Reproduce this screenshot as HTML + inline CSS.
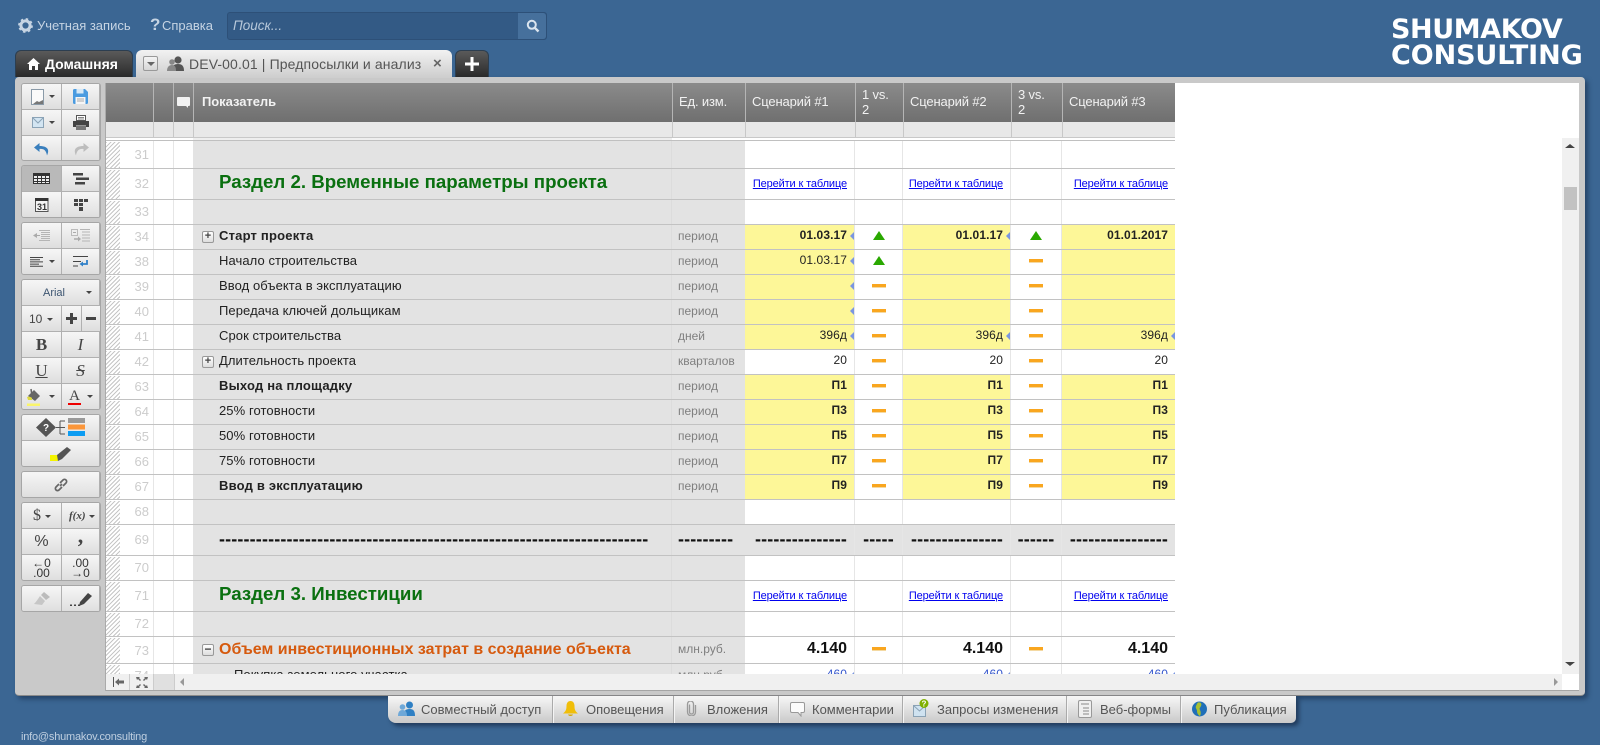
<!DOCTYPE html>
<html lang="ru"><head><meta charset="utf-8"><title>DEV-00.01</title>
<style>
html,body{margin:0;padding:0;width:1600px;height:745px;overflow:hidden;background:#3b6693;font-family:"Liberation Sans",Arial,sans-serif}
.a{position:absolute}
svg{display:block}
.hl{color:#c6d4e3;font-size:13px;line-height:20px;white-space:nowrap}
.logo{font-family:"DejaVu Sans",sans-serif;font-weight:bold;color:#fff;font-size:27px;line-height:28px;white-space:nowrap}
.tab{border-radius:6px 6px 0 0;box-sizing:border-box}
.dk{background:linear-gradient(#5a5a5a,#2a2a2a);border:1px solid #2c3e50;border-bottom:0}
#panel{left:15px;top:77px;width:1570px;height:619px;background:#c9c9c9;border-radius:4px;box-shadow:3px 3px 5px rgba(20,40,70,.55);border-bottom:1px solid #8a8a8a;box-sizing:border-box}
.g{position:absolute;left:21px;width:80px;box-sizing:border-box;border:1px solid #a6a6a6;border-radius:3px;overflow:hidden;display:grid;grid-template-columns:40px 20px 18px;grid-auto-rows:26px}
.t{background:linear-gradient(#f6f6f6,#dedede);border-right:1px solid #b0b0b0;border-bottom:1px solid #b0b0b0;box-sizing:border-box;display:flex;align-items:center;justify-content:center;color:#444;font-size:12px;position:relative}
.r2{grid-column:span 2}.f{grid-column:span 3}
.t.on{background:#b9b9b9}
.car{position:absolute;width:0;height:0;border-left:3px solid transparent;border-right:3px solid transparent;border-top:3px solid #444;top:11px}
.se{font-family:"Liberation Serif",serif;font-size:17px;font-weight:bold;color:#444}
#grid{left:105px;top:83px;width:1474px;height:608px;background:#fff;overflow:hidden;border-left:1px solid #aaa;box-sizing:border-box}
.hd{position:absolute;left:0;top:0;width:1069px;height:39px;background:linear-gradient(#8b8b8b,#6f6f6f);color:#fff;font-size:13px;letter-spacing:-.15px}
.hd div{position:absolute;top:0;height:39px;line-height:38px;white-space:nowrap;border-left:1px solid #b5b5b5;box-sizing:border-box;color:#f2f2f2}
.fl{position:absolute;left:0;top:39px;width:1069px;height:15px;background:#e8e8e8}
.fl i{position:absolute;top:0;width:1px;height:15px;background:#c8c8c8}
.row{position:absolute;left:0;width:1069px;display:flex;box-sizing:border-box;border-bottom:1px solid #c2c2c2;font-size:13px;color:#222;white-space:nowrap;overflow:hidden}
.row>div{box-sizing:border-box;height:100%;position:relative;flex:none;overflow:visible}
.c0{width:48px;text-align:right;padding-right:4px;color:#ccc;border-right:1px solid #e6e6e6;background:repeating-linear-gradient(135deg,#c6c6c6 0 1px,#fff 1px 3px) 0 1px/14px 100% no-repeat;background-color:#fff}
.c1,.c2{border-right:1px solid #e6e6e6}
.c1{width:20px}
.c2{width:19px;background:#fff;border-right:0}
.nm{width:479px;background:#e3e3e3;padding-left:26px;border-right:1px solid #dcdcdc;letter-spacing:.08px;line-height:21px}
.nm.bd{letter-spacing:.2px}
.un{width:73px;background:#e3e3e3;padding-left:6px;color:#7f7f7f;font-size:12px;line-height:22px}
.v1,.v2,.v3{text-align:right;border-right:1px solid #e6e6e6;color:#222;font-size:12px;letter-spacing:.08px;line-height:21px}
.v1{width:110px;padding-right:7px}.v2{width:108px;padding-right:7px}.v3{width:113px;padding-right:7px;border-right:0}
.d1,.d2{text-align:center;border-right:1px solid #e6e6e6}
.d1{width:48px}.d2{width:51px}
.y{background:#fdf798}
.s{background:#e3e3e3!important}
.bd{font-weight:bold}
.up{position:absolute;left:50%;top:50%;margin:-6px 0 0 -6px;width:0;height:0;border-left:6px solid transparent;border-right:6px solid transparent;border-bottom:9px solid #2aa800}
.ds{position:absolute;left:50%;top:50%;margin:-3px 0 0 -7px;width:14px;height:3px;background:#f9a61f;border-bottom:1px solid #f4d9a2}
.mk{position:absolute;right:0;top:50%;margin-top:-5px;width:0;height:0;border-top:4px solid transparent;border-bottom:4px solid transparent;border-right:4px solid #7a96e0}
.pm{position:absolute;left:9px;top:50%;margin-top:-6px;width:10px;height:10px;border:1px solid #999;border-radius:2px;background:linear-gradient(#fff,#ddd);color:#444;font-size:11px;line-height:9px;text-align:center;font-weight:bold;letter-spacing:0}
.lk{line-height:28px;letter-spacing:0}
a{color:#00e;font-size:11px;text-decoration:underline;letter-spacing:-.12px}
.nm.h1{font-size:18.7px;font-weight:bold;color:#0a7010;letter-spacing:0;line-height:26px}
.nm.h2{font-size:16px;font-weight:bold;color:#d65a0e;letter-spacing:0;line-height:25px}
.big{font-size:16px;font-weight:bold;color:#111;letter-spacing:0;line-height:24px}
.dash,.row .dash{font-weight:bold;color:#111;font-size:18px;letter-spacing:.14px;line-height:29px}
#sb{position:absolute;left:0;top:591px;width:1473px;height:17px;background:#f0f0f0;border-bottom:1px solid #a5a5a5;box-sizing:border-box}
#vs{position:absolute;left:1456px;top:55px;width:17px;height:536px;background:#f0f0f0}
#btm{left:388px;top:696px;width:908px;height:27px;background:linear-gradient(#f7f7f7,#c9c9c9);border-radius:0 0 5px 8px;box-shadow:3px 3px 4px rgba(15,30,55,.6);color:#555;font-size:13px;line-height:27px}
#btm span{position:absolute;top:0;white-space:nowrap}
#btm i{position:absolute;top:0;width:1px;height:27px;background:#aaa;border-right:1px solid #f4f4f4}
#btm svg{position:absolute}
</style></head>
<body>
<!-- top bar -->
<svg class="a" style="left:18px;top:18px" width="15" height="15" viewBox="0 0 15 15"><circle cx="7.5" cy="7.5" r="4.6" fill="none" stroke="#c6d4e3" stroke-width="3"/><circle cx="7.5" cy="7.5" r="6.3" fill="none" stroke="#c6d4e3" stroke-width="2.2" stroke-dasharray="2.4 2.55"/></svg>
<div class="a hl" style="left:37px;top:16px">Учетная запись</div>
<div class="a hl" style="left:150px;top:15px;font-weight:bold;font-size:17px">?</div>
<div class="a hl" style="left:162px;top:16px">Справка</div>
<div class="a" style="left:227px;top:12px;width:320px;height:28px;background:#335a85;border:1px solid #2d5078;box-sizing:border-box;border-radius:3px"></div>
<div class="a" style="left:518px;top:13px;width:28px;height:26px;background:#46709c;border-radius:0 3px 3px 0"></div>
<svg class="a" style="left:526px;top:19px" width="14" height="14" viewBox="0 0 14 14"><circle cx="5.8" cy="5.8" r="4" fill="none" stroke="#dbe5ef" stroke-width="2"/><path d="M8.8 8.8L12.5 12.5" stroke="#dbe5ef" stroke-width="2.4"/></svg>
<div class="a hl" style="left:233px;top:16px;font-style:italic;color:#b7c8da;font-size:13.5px">Поиск...</div>
<div class="a logo" style="left:1391px;top:16px;letter-spacing:-.4px">SHUMAKOV</div>
<div class="a logo" style="left:1391px;top:42px;letter-spacing:-.1px">CONSULTING</div>
<!-- tabs -->
<div class="a tab dk" style="left:15px;top:50px;width:118px;height:27px"></div>
<svg class="a" style="left:27px;top:58px" width="13" height="12" viewBox="0 0 13 12"><path d="M6.5 0L0 6h2v6h3V8h3v4h3V6h2z" fill="#fff"/></svg>
<div class="a" style="left:45px;top:54px;color:#fff;font-weight:bold;font-size:14px;line-height:20px;white-space:nowrap">Домашняя</div>
<div class="a tab" style="left:136px;top:50px;width:316px;height:28px;background:linear-gradient(#f2f2f2,#cdcdcd);z-index:2"></div>
<div class="a" style="left:143px;top:56px;width:15px;height:15px;box-sizing:border-box;border:1px solid #999;border-radius:2px;background:linear-gradient(#f4f4f4,#d6d6d6);z-index:3"></div>
<div class="a" style="left:147px;top:62px;width:0;height:0;border-left:4px solid transparent;border-right:4px solid transparent;border-top:4px solid #666;z-index:3"></div>
<svg class="a" style="left:167px;top:56px;z-index:3" width="17" height="15" viewBox="0 0 17 15"><circle cx="11" cy="4" r="3.6" fill="#555"/><path d="M4.500 15c0-5 2.500-7 6.500-7s6 2 6 7z" fill="#555"/><circle cx="5" cy="6" r="2.800" fill="#888"/><path d="M0 15c0-4 2-6 5-6s4 2 4 6z" fill="#888"/></svg>
<div class="a" style="left:189px;top:54px;color:#555;font-size:14px;line-height:20px;white-space:nowrap;z-index:3;letter-spacing:.12px">DEV-00.01 | Предпосылки и анализ</div>
<div class="a" style="left:433px;top:54px;color:#666;font-size:15px;line-height:20px;font-weight:bold;z-index:3">×</div>
<div class="a tab dk" style="left:455px;top:50px;width:34px;height:27px"></div>
<svg class="a" style="left:465px;top:57px" width="14" height="14" viewBox="0 0 14 14"><path d="M5.500 0h3v5.500H14v3H8.500V14h-3V8.500H0v-3h5.500z" fill="#fff"/></svg>

<div id="panel" class="a"></div>
<!-- toolbar -->
<div class="g" style="top:83px;height:78px">
 <div class="t"><svg style="margin-right:7px" width="14" height="16" viewBox="0 0 14 16"><path d="M.5.5h12v15H.5z" fill="#fafafa" stroke="#8a9aa8"/><path d="M2 15l4-3 2 1 4-2v4z" fill="#777"/></svg><span class="car" style="right:6px;top:11px"></span></div>
 <div class="t r2"><svg width="15" height="15" viewBox="0 0 15 15"><path d="M0 1.500Q0 0 1.500 0H12l3 3v10.500Q15 15 13.500 15h-12Q0 15 0 13.500z" fill="#4a9be0"/><path d="M3.500 0h7v4.500h-7z" fill="#d6e8f6"/><path d="M2.500 8h10v7h-10z" fill="#f6f6f6"/><path d="M4 10h7M4 12h7" stroke="#aaa"/></svg></div>
 <div class="t"><svg style="margin-right:7px" width="12" height="11" viewBox="0 0 12 11"><path d="M.5.500h11v10H.5z" fill="#d3e5f2" stroke="#8ba3b6"/><path d="M.5.500L6 6l5.500-5.500" fill="none" stroke="#8ba3b6"/></svg><span class="car" style="right:6px;top:11px"></span></div>
 <div class="t r2"><svg width="16" height="15" viewBox="0 0 16 15"><path d="M3.500.500h9v5h-9z" fill="#fff" stroke="#555"/><path d="M5 2.500h6M5 4h6" stroke="#888"/><path d="M0 6h16v6H13v-1.500H3V12H0z" fill="#444"/><path d="M3 11h10v4H3z" fill="#777"/></svg></div>
 <div class="t" style="border-bottom:0"><svg width="16" height="13" viewBox="0 0 16 13"><path d="M5.500 0L0 4.500 5.500 9V6c4-.5 6.500 1 7.500 6.500 2.500-5 1.500-9.500-7.500-9.500z" fill="#3a7fbd"/></svg></div>
 <div class="t r2" style="border-bottom:0"><svg width="16" height="13" viewBox="0 0 16 13"><path d="M10.500 0L16 4.500 10.500 9V6c-4-.5-6.500 1-7.500 6.500C.5 7.500 1.500 3 10.500 3z" fill="#bdbdbd"/></svg></div>
</div>
<div class="g" style="top:165px;height:53px">
 <div class="t on"><svg width="17" height="11" viewBox="0 0 17 11"><path d="M0 0h17v11H0z" fill="#333"/><path d="M1 3h3v2H1zM5 3h3v2H5zM9 3h3v2H9zM13 3h3v2h-3zM1 6h3v2H1zM5 6h3v2H5zM9 6h3v2H9zM13 6h3v2h-3zM1 9h3v1H1zM5 9h3v1H5zM9 9h3v1H9zM13 9h3v1h-3z" fill="#eee"/></svg></div>
 <div class="t r2"><svg width="16" height="12" viewBox="0 0 16 12"><path d="M0 0h10v2.500H0zM3 4.500h13V7H3zM2 9h10v2.500H2z" fill="#444"/></svg></div>
 <div class="t" style="border-bottom:0"><svg width="14" height="14" viewBox="0 0 14 14"><path d="M.5.500h12.500v13H.5z" fill="#f4f4f4" stroke="#555"/><path d="M0 0h13.500v3H0z" fill="#333"/><text x="7" y="12" text-anchor="middle" font-family="Liberation Sans" font-size="9" font-weight="bold" fill="#333">31</text></svg></div>
 <div class="t r2" style="border-bottom:0"><svg width="14" height="12" viewBox="0 0 14 12"><path d="M0 0h4v3H0zM5 0h4v3H5zM10 0h4v3h-4zM0 4h4v3H0zM5 4h4v3H5zM5 8h4v4H5z" fill="#444"/></svg></div>
</div>
<div class="g" style="top:222px;height:53px">
 <div class="t"><svg width="17" height="11" viewBox="0 0 17 11"><path d="M6 .500h11M8 2.500h9M8 4.500h9M8 6.500h9M8 8.500h9M6 10.500h11" stroke="#b5b5b5"/><path d="M0 5.500L4 3v5z" fill="#aaa"/><path d="M3 5.500h4" stroke="#aaa"/></svg></div>
 <div class="t r2"><svg width="19" height="14" viewBox="0 0 19 14"><path d="M.5.500h6v6h-6z" fill="#eee" stroke="#bbb"/><path d="M2 3.500h3" stroke="#aaa"/><path d="M9 .500h10M11 3h8M11 6h8M11 9h8M11 12h8" stroke="#b5b5b5"/><path d="M3 10h5" stroke="#aaa" stroke-width="1.500"/><path d="M10 10L7 7.500v5z" fill="#aaa"/></svg></div>
 <div class="t" style="border-bottom:0"><svg width="14" height="11" viewBox="0 0 14 11" style="margin-right:9px"><path d="M0 .500h13M0 2.700h10M0 4.900h13M0 7.100h9M0 9.300h13" stroke="#444"/></svg><span class="car" style="right:6px;top:11px"></span></div>
 <div class="t r2" style="border-bottom:0"><svg width="16" height="12" viewBox="0 0 16 12"><path d="M0 .500h15M0 5.500h8M0 10h5" stroke="#444"/><path d="M14 4v4H9" fill="none" stroke="#2f80c8" stroke-width="1.800"/><path d="M6.500 8L10 5.500v5z" fill="#2f80c8"/></svg></div>
</div>
<div class="g" style="top:279px;height:131px">
 <div class="t f" style="color:#3c5470;font-size:11px;padding-right:13px">Arial<span class="car" style="right:7px;top:11px"></span></div>
 <div class="t" style="font-size:12px;color:#444;justify-content:flex-start;padding-left:7px">10<span class="car" style="right:8px;top:12px"></span></div>
 <div class="t"><svg width="11" height="11" viewBox="0 0 11 11"><path d="M4 0h3v4h4v3H7v4H4V7H0V4h4z" fill="#444"/></svg></div>
 <div class="t" style="border-right:0"><svg width="10" height="3" viewBox="0 0 10 3"><path d="M0 0h10v3H0z" fill="#444"/></svg></div>
 <div class="t se">B</div>
 <div class="t r2 se" style="font-style:italic;font-weight:normal">I</div>
 <div class="t se" style="font-weight:normal;text-decoration:underline">U</div>
 <div class="t r2 se" style="font-weight:normal;font-style:italic;text-decoration:line-through">S</div>
 <div class="t" style="border-bottom:0;justify-content:flex-start"><svg style="margin-left:5px" width="14" height="18" viewBox="0 0 14 18"><path d="M1 8L7 2l6 6-5 5z" fill="#666"/><path d="M4 1l1 7" stroke="#666" stroke-width="1.500"/><path d="M0 9c2-1 4 0 5 1v2H1z" fill="#ddd840"/><path d="M0 15.500h13V18H0z" fill="#faf56a"/></svg><span class="car" style="right:6px;top:11px"></span></div>
 <div class="t r2" style="border-bottom:0;justify-content:flex-start"><span style="font-family:'Liberation Serif',serif;font-size:15px;line-height:13px;color:#444;margin-left:6px;border-bottom:2.500px solid #e00;width:13px;text-align:center;display:block">A</span><span class="car" style="right:6px;top:11px"></span></div>
</div>
<div class="g" style="top:414px;height:53px">
 <div class="t f"><svg width="50" height="19" viewBox="0 0 50 19"><path d="M10 0l10 9.500L10 19 0 9.500z" fill="#555"/><text x="10" y="13" text-anchor="middle" font-size="10" font-weight="bold" font-family="Liberation Sans" fill="#fff">?</text><path d="M20 9.500h4M24 3v13M24 3h5M24 9.500h5M24 16h5" stroke="#555" fill="none"/><path d="M32 0h17v5H32z" fill="#999"/><path d="M32 6.500h17v5H32z" fill="#fb963a"/><path d="M32 13h17v5H32z" fill="#0c9cf2"/></svg></div>
 <div class="t f" style="border-bottom:0"><svg width="22" height="16" viewBox="0 0 22 16"><path d="M0 9h8v6H0z" fill="#f4f400"/><path d="M7 9L17 1l4 3-9 9-4 2z" fill="#555"/></svg></div>
</div>
<div class="g" style="top:471px;height:27px"><div class="t f" style="border-bottom:0"><svg width="14" height="14" viewBox="0 0 14 14"><path d="M6 8l2-2M5 6L2 9a2.100 2.100 0 003 3l3-3M9 8l3-3a2.100 2.100 0 00-3-3L6 5" fill="none" stroke="#666" stroke-width="1.700"/></svg></div></div>
<div class="g" style="top:502px;height:79px">
 <div class="t se" style="font-weight:normal;font-size:16px;justify-content:flex-start;padding-left:11px">$<span class="car" style="right:10px;top:12px"></span></div>
 <div class="t r2 se" style="font-size:11px;font-style:italic;justify-content:flex-start;padding-left:7px">f(x)<span class="car" style="right:4px;top:12px"></span></div>
 <div class="t" style="font-size:16px">%</div>
 <div class="t r2 se" style="font-size:22px;line-height:14px;padding-bottom:12px">,</div>
 <div class="t" style="border-bottom:0;font-size:12px;line-height:10px;text-align:center;display:block;padding-top:3px;color:#333">←0<br>.00</div>
 <div class="t r2" style="border-bottom:0;font-size:12px;line-height:10px;text-align:center;display:block;padding-top:3px;color:#333">.00<br>→0</div>
</div>
<div class="g" style="top:585px;height:27px">
 <div class="t" style="border-bottom:0"><svg width="16" height="14" viewBox="0 0 16 14"><path d="M10 0l6 5-4 3-5-5z" fill="#bbb"/><path d="M6 4l5 5-3 4-8-1c2-2 4-5 6-8z" fill="#c6c6c6"/></svg></div>
 <div class="t r2" style="border-bottom:0"><svg width="22" height="14" viewBox="0 0 22 14"><path d="M10 10L18 1l4 3-8 8-5 2z" fill="#444"/><path d="M0 12.500h2v1.500H0zM4 12.500h2v1.500H4zM8 12.500h2v1.500H8z" fill="#444"/></svg></div>
</div>

<!-- grid -->
<div id="grid" class="a">
 <div class="hd">
  <div style="left:0;width:48px;border-left:0"></div>
  <div style="left:47px;width:21px"></div>
  <div style="left:67px;width:20px"><svg style="margin:14px 0 0 3px" width="13" height="11" viewBox="0 0 13 11"><path d="M0 1q0-1 1-1h11q1 0 1 1v7q0 1-1 1h-1v2L9 9H1q-1 0-1-1z" fill="#f2f2f2"/></svg></div>
  <div style="left:87px;width:479px;padding-left:8px;font-weight:bold;letter-spacing:-.05px">Показатель</div>
  <div style="left:566px;width:73px;padding-left:6px">Ед. изм.</div>
  <div style="left:639px;width:110px;padding-left:6px">Сценарий #1</div>
  <div style="left:749px;width:48px;padding:4px 0 0 6px;line-height:15px;white-space:normal">1 vs.<br>2</div>
  <div style="left:797px;width:108px;padding-left:6px">Сценарий #2</div>
  <div style="left:905px;width:51px;padding:4px 0 0 6px;line-height:15px;white-space:normal">3 vs.<br>2</div>
  <div style="left:956px;width:113px;padding-left:6px">Сценарий #3</div>
 </div>
 <div class="fl"><i style="left:47px"></i><i style="left:67px"></i><i style="left:87px"></i><i style="left:566px"></i><i style="left:639px"></i><i style="left:749px"></i><i style="left:797px"></i><i style="left:905px"></i><i style="left:956px"></i></div>
 <div class="a" style="left:0;top:54px;width:1069px;height:1px;background:#c8c8c8"></div>
 <div class="a" style="left:0;top:57px;width:1069px;height:1px;background:#c0c0c0"></div>
 <div class="a" style="left:87px;top:55px;width:479px;height:2px;background:#eee"></div>

 <div class="row" style="top:58px;height:28px;line-height:27px"><div class="c0">31</div><div class="c1"></div><div class="c2"></div><div class="nm"></div><div class="un"></div><div class="v1"></div><div class="d1"></div><div class="v2"></div><div class="d2"></div><div class="v3"></div></div>
 <div class="row" style="top:86px;height:31px;line-height:30px"><div class="c0">32</div><div class="c1"></div><div class="c2"></div><div class="nm h1">Раздел 2. Временные параметры проекта</div><div class="un"></div><div class="v1 lk"><a href="#">Перейти к таблице</a></div><div class="d1"></div><div class="v2 lk"><a href="#">Перейти к таблице</a></div><div class="d2"></div><div class="v3 lk"><a href="#">Перейти к таблице</a></div></div>
 <div class="row" style="top:117px;height:25px;line-height:24px"><div class="c0">33</div><div class="c1"></div><div class="c2"></div><div class="nm"></div><div class="un"></div><div class="v1"></div><div class="d1"></div><div class="v2"></div><div class="d2"></div><div class="v3"></div></div>
 <div class="row" style="top:142px;height:25px;line-height:23px"><div class="c0">34</div><div class="c1"></div><div class="c2"></div><div class="nm bd"><span class="pm">+</span>Старт проекта</div><div class="un">период</div><div class="v1 y bd">01.03.17<span class="mk"></span></div><div class="d1"><span class="up"></span></div><div class="v2 y bd">01.01.17<span class="mk"></span></div><div class="d2"><span class="up"></span></div><div class="v3 y bd">01.01.2017</div></div>
 <div class="row" style="top:167px;height:25px;line-height:23px"><div class="c0">38</div><div class="c1"></div><div class="c2"></div><div class="nm">Начало строительства</div><div class="un">период</div><div class="v1 y">01.03.17<span class="mk"></span></div><div class="d1"><span class="up"></span></div><div class="v2 y"></div><div class="d2"><span class="ds"></span></div><div class="v3 y"></div></div>
 <div class="row" style="top:192px;height:25px;line-height:23px"><div class="c0">39</div><div class="c1"></div><div class="c2"></div><div class="nm">Ввод объекта в эксплуатацию</div><div class="un">период</div><div class="v1 y"><span class="mk"></span></div><div class="d1"><span class="ds"></span></div><div class="v2 y"></div><div class="d2"><span class="ds"></span></div><div class="v3 y"></div></div>
 <div class="row" style="top:217px;height:25px;line-height:23px"><div class="c0">40</div><div class="c1"></div><div class="c2"></div><div class="nm">Передача ключей дольщикам</div><div class="un">период</div><div class="v1 y"><span class="mk"></span></div><div class="d1"><span class="ds"></span></div><div class="v2 y"></div><div class="d2"><span class="ds"></span></div><div class="v3 y"></div></div>
 <div class="row" style="top:242px;height:25px;line-height:23px"><div class="c0">41</div><div class="c1"></div><div class="c2"></div><div class="nm">Срок строительства</div><div class="un">дней</div><div class="v1 y">396д<span class="mk"></span></div><div class="d1"><span class="ds"></span></div><div class="v2 y">396д<span class="mk"></span></div><div class="d2"><span class="ds"></span></div><div class="v3 y">396д<span class="mk"></span></div></div>
 <div class="row" style="top:267px;height:25px;line-height:23px"><div class="c0">42</div><div class="c1"></div><div class="c2"></div><div class="nm"><span class="pm">+</span>Длительность проекта</div><div class="un">кварталов</div><div class="v1">20</div><div class="d1"><span class="ds"></span></div><div class="v2">20</div><div class="d2"><span class="ds"></span></div><div class="v3">20</div></div>
 <div class="row" style="top:292px;height:25px;line-height:23px"><div class="c0">63</div><div class="c1"></div><div class="c2"></div><div class="nm bd">Выход на площадку</div><div class="un">период</div><div class="v1 y bd">П1</div><div class="d1"><span class="ds"></span></div><div class="v2 y bd">П1</div><div class="d2"><span class="ds"></span></div><div class="v3 y bd">П1</div></div>
 <div class="row" style="top:317px;height:25px;line-height:23px"><div class="c0">64</div><div class="c1"></div><div class="c2"></div><div class="nm">25% готовности</div><div class="un">период</div><div class="v1 y bd">П3</div><div class="d1"><span class="ds"></span></div><div class="v2 y bd">П3</div><div class="d2"><span class="ds"></span></div><div class="v3 y bd">П3</div></div>
 <div class="row" style="top:342px;height:25px;line-height:23px"><div class="c0">65</div><div class="c1"></div><div class="c2"></div><div class="nm">50% готовности</div><div class="un">период</div><div class="v1 y bd">П5</div><div class="d1"><span class="ds"></span></div><div class="v2 y bd">П5</div><div class="d2"><span class="ds"></span></div><div class="v3 y bd">П5</div></div>
 <div class="row" style="top:367px;height:25px;line-height:23px"><div class="c0">66</div><div class="c1"></div><div class="c2"></div><div class="nm">75% готовности</div><div class="un">период</div><div class="v1 y bd">П7</div><div class="d1"><span class="ds"></span></div><div class="v2 y bd">П7</div><div class="d2"><span class="ds"></span></div><div class="v3 y bd">П7</div></div>
 <div class="row" style="top:392px;height:25px;line-height:23px"><div class="c0">67</div><div class="c1"></div><div class="c2"></div><div class="nm bd">Ввод в эксплуатацию</div><div class="un">период</div><div class="v1 y bd">П9</div><div class="d1"><span class="ds"></span></div><div class="v2 y bd">П9</div><div class="d2"><span class="ds"></span></div><div class="v3 y bd">П9</div></div>
 <div class="row" style="top:417px;height:25px;line-height:24px"><div class="c0">68</div><div class="c1"></div><div class="c2"></div><div class="nm"></div><div class="un"></div><div class="v1"></div><div class="d1"></div><div class="v2"></div><div class="d2"></div><div class="v3"></div></div>
 <div class="row" style="top:442px;height:31px;line-height:30px"><div class="c0">69</div><div class="c1"></div><div class="c2"></div><div class="nm dash">----------------------------------------------------------------------</div><div class="un dash" style="padding-left:6px">---------</div><div class="v1 s dash">---------------</div><div class="d1 s dash">-----</div><div class="v2 s dash">---------------</div><div class="d2 s dash">------</div><div class="v3 s dash">----------------</div></div>
 <div class="row" style="top:473px;height:25px;line-height:24px"><div class="c0">70</div><div class="c1"></div><div class="c2"></div><div class="nm"></div><div class="un"></div><div class="v1"></div><div class="d1"></div><div class="v2"></div><div class="d2"></div><div class="v3"></div></div>
 <div class="row" style="top:498px;height:31px;line-height:30px"><div class="c0">71</div><div class="c1"></div><div class="c2"></div><div class="nm h1">Раздел 3. Инвестиции</div><div class="un"></div><div class="v1 lk"><a href="#">Перейти к таблице</a></div><div class="d1"></div><div class="v2 lk"><a href="#">Перейти к таблице</a></div><div class="d2"></div><div class="v3 lk"><a href="#">Перейти к таблице</a></div></div>
 <div class="row" style="top:529px;height:25px;line-height:24px"><div class="c0">72</div><div class="c1"></div><div class="c2"></div><div class="nm"></div><div class="un"></div><div class="v1"></div><div class="d1"></div><div class="v2"></div><div class="d2"></div><div class="v3"></div></div>
 <div class="row" style="top:554px;height:27px;line-height:25px"><div class="c0" style="line-height:27px">73</div><div class="c1"></div><div class="c2"></div><div class="nm h2"><span class="pm" style="font-size:12px">−</span>Объем инвестиционных затрат в создание объекта</div><div class="un" style="line-height:24px">млн.руб.</div><div class="v1 big">4.140</div><div class="d1"><span class="ds"></span></div><div class="v2 big">4.140</div><div class="d2"><span class="ds"></span></div><div class="v3 big">4.140</div></div>
 <div class="row" style="top:581px;height:25px;line-height:23px;border-bottom:0"><div class="c0">74</div><div class="c1"></div><div class="c2"></div><div class="nm" style="padding-left:41px">Покупка земельного участка</div><div class="un">млн.руб.</div><div class="v1" style="color:#3355cc">460<span class="mk"></span></div><div class="d1"><span class="ds"></span></div><div class="v2" style="color:#3355cc">460<span class="mk"></span></div><div class="d2"><span class="ds"></span></div><div class="v3" style="color:#3355cc">460<span class="mk"></span></div></div>

 <div id="vs">
  <div class="a" style="left:3px;top:6px;width:0;height:0;border-left:5px solid transparent;border-right:5px solid transparent;border-bottom:4px solid #444"></div>
  <div class="a" style="left:2px;top:49px;width:13px;height:23px;background:#c2c2c2"></div>
  <div class="a" style="left:3px;top:524px;width:0;height:0;border-left:5px solid transparent;border-right:5px solid transparent;border-top:4px solid #444"></div>
 </div>
 <div id="sb">
  <div class="a" style="left:0;top:0;width:24px;height:16px;border-right:1px solid #ccc;box-sizing:border-box"><svg style="margin:3px 0 0 7px" width="11" height="10" viewBox="0 0 11 10"><path d="M.5 0v10" stroke="#555"/><path d="M2 5l4-3.500V3.500h5v3H6v2z" fill="#666"/></svg></div>
  <div class="a" style="left:24px;top:0;width:24px;height:16px;border-right:1px solid #ccc;box-sizing:border-box"><svg style="margin:3px 0 0 6px" width="12" height="11" viewBox="0 0 12 11"><path d="M0 0h4L3 1l2 2-1 1-2-2-1 1zM12 0H8l1 1-2 2 1 1 2-2 1 1zM0 11h4L3 10l2-2-1-1-2 2-1-1zM12 11H8l1-1-2-2 1-1 2 2 1-1z" fill="#666"/></svg></div>
  <div class="a" style="left:48px;top:0;width:20px;height:16px;background:#e0e0e0;border-right:1px solid #ccc"></div>
  <div class="a" style="left:74px;top:4px;width:0;height:0;border-top:4px solid transparent;border-bottom:4px solid transparent;border-right:4px solid #999"></div>
  <div class="a" style="left:1448px;top:4px;width:0;height:0;border-top:4px solid transparent;border-bottom:4px solid transparent;border-left:4px solid #999"></div>
 </div>
 <div class="a" style="left:1456px;top:591px;width:17px;height:17px;background:#fff;border-bottom:1px solid #a5a5a5;box-sizing:border-box"></div>
</div>

<!-- bottom tabs -->
<div id="btm" class="a">
 <svg style="left:10px;top:5px" width="17" height="15" viewBox="0 0 17 15"><circle cx="11.500" cy="4" r="3.500" fill="#2f80c4"/><path d="M5.500 15c0-5 2-7 6-7s5.500 2 5.500 7z" fill="#2f80c4"/><circle cx="4.500" cy="6" r="2.800" fill="#6ea8d8"/><path d="M0 15c0-4 1.500-6 4.500-6S9 11 9 15z" fill="#6ea8d8"/></svg>
 <span style="left:33px">Совместный доступ</span><i style="left:164px"></i>
 <svg style="left:175px;top:5px" width="15" height="15" viewBox="0 0 15 15"><path d="M7.500 0C10 0 11.500 2 11.500 5c0 4 1 5.500 3.500 7.500H0C2.500 10.500 3.500 9 3.500 5 3.500 2 5 0 7.500 0z" fill="#f0be0a"/><path d="M5 13.500h5Q9.500 15 7.500 15T5 13.500z" fill="#d6a600"/></svg>
 <span style="left:198px">Оповещения</span><i style="left:285px"></i>
 <svg style="left:298px;top:5px" width="11" height="15" viewBox="0 0 11 15"><path d="M3.500 3.500v7.500a2 2 0 004 0V3a3 3 0 00-6 0v8a4 4 0 008 0V4" fill="none" stroke="#9a9a9a" stroke-width="1.300"/></svg>
 <span style="left:319px">Вложения</span><i style="left:390px"></i>
 <svg style="left:402px;top:6px" width="15" height="15" viewBox="0 0 15 15"><path d="M2 .500h11q1.500 0 1.500 1.500v7q0 1.500-1.500 1.500h-2V14L8 10.500H2Q.5 10.500.5 9V2Q.5.500 2 .500z" fill="#fbfbfb" stroke="#999"/></svg>
 <span style="left:424px">Комментарии</span><i style="left:514px"></i>
 <svg style="left:525px;top:3px" width="16" height="18" viewBox="0 0 16 18"><path d="M.5 6.500h12v11H.5z" fill="#cfe2f0" stroke="#8aa2b5"/><path d="M.5 6.500L6.500 12l6-5.500" fill="none" stroke="#8aa2b5"/><circle cx="11" cy="4.500" r="4.500" fill="#7fb000"/><text x="11" y="7.500" text-anchor="middle" font-size="8" font-weight="bold" font-family="Liberation Sans" fill="#fff">?</text></svg>
 <span style="left:549px">Запросы изменения</span><i style="left:678px"></i>
 <svg style="left:690px;top:4px" width="14" height="18" viewBox="0 0 14 18"><path d="M2 .500h10q1.500 0 1.500 1.500v14q0 1.500-1.500 1.500H2Q.5 17.500.5 16V2Q.5.500 2 .500z" fill="#efefef" stroke="#999"/><path d="M3 4h8M5 8h6M5 11h6M5 14h6" stroke="#888"/></svg>
 <span style="left:712px">Веб-формы</span><i style="left:792px"></i>
 <svg style="left:804px;top:5px" width="15" height="16" viewBox="0 0 15 16"><circle cx="7.500" cy="8" r="7.500" fill="#1f6fb8"/><path d="M6 1.500c3-.5 4 1.500 3 3.500S7 7 8 9s1 4 0 6c-2-1-3-3-3-5S3 7 4 5s1-2.500 2-3.500z" fill="#a8bf30"/></svg>
 <span style="left:826px">Публикация</span>
</div>
<div class="a" style="left:21px;top:729px;color:#bfcfe0;font-size:11px;letter-spacing:-.2px;line-height:16px;white-space:nowrap">info@shumakov.consulting</div>
</body></html>
